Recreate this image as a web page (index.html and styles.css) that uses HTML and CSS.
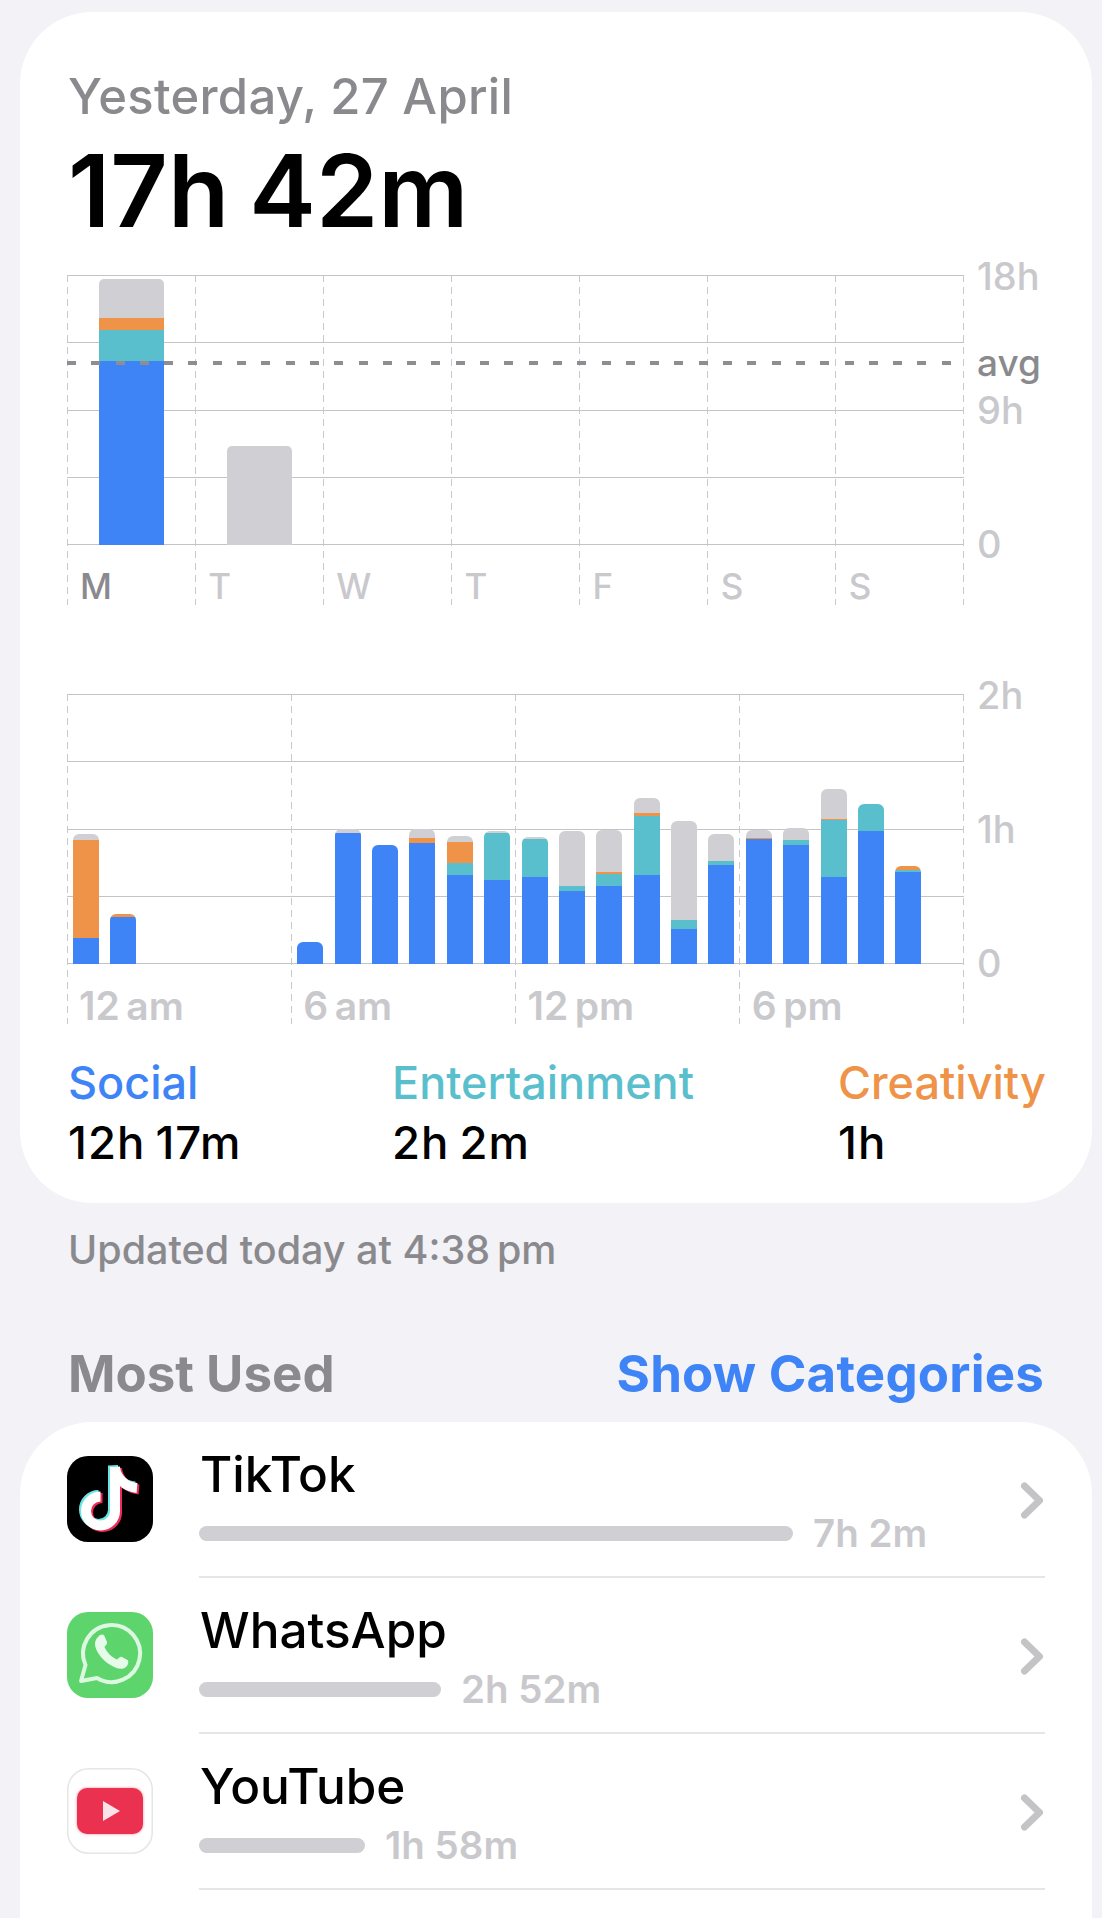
FILE: index.html

```html
<!DOCTYPE html>
<html lang="en">
<head>
    <meta charset="UTF-8">
    <meta name="viewport" content="width=device-width, initial-scale=1.0">
    <title>Screen Time</title>
    <link rel="stylesheet" href="styles.css">
</head>
<body>
    <section class="card summary">
        <div class="day">Yesterday, 27 April</div>
        <div class="total">17h 42m</div>

        <div class="chart week-chart">
            <div class="plot">
                <div class="hlines"><i></i><i></i><i></i><i></i><i></i></div>
                <div class="vlines"><i></i><i></i><i></i><i></i><i></i><i></i><i></i><i></i></div>
                <div class="bars week">
                    <div class="bar">
                        <span class="other" style="height:39px"></span>
                        <span class="creativity" style="height:12px"></span>
                        <span class="entertainment" style="height:31px"></span>
                        <span class="social" style="height:184px"></span>
                    </div>
                    <div class="bar">
                        <span class="other" style="height:99px"></span>
                    </div>
                </div>
                <div class="avg-line"></div>
                <div class="xlabels week">
                    <span class="current">M</span><span>T</span><span>W</span><span>T</span><span>F</span><span>S</span><span>S</span>
                </div>
            </div>
            <div class="axis">
                <span>18h</span><span>9h</span><span>0</span>
                <b class="avg">avg</b>
            </div>
        </div>

        <div class="chart hour-chart">
            <div class="plot">
                <div class="hlines"><i></i><i></i><i></i><i></i><i></i></div>
                <div class="vlines"><i></i><i></i><i></i><i></i><i></i></div>
                <div class="bars hours">
                    <div class="bar"><span class="other" style="height:6px"></span><span class="creativity" style="height:98px"></span><span class="social" style="height:26px"></span></div>
                    <div class="bar"><span class="creativity" style="height:3px"></span><span class="social" style="height:47px"></span></div>
                    <div class="bar empty"></div>
                    <div class="bar empty"></div>
                    <div class="bar empty"></div>
                    <div class="bar empty"></div>
                    <div class="bar"><span class="social" style="height:22px"></span></div>
                    <div class="bar"><span class="other" style="height:4px"></span><span class="social" style="height:131px"></span></div>
                    <div class="bar"><span class="social" style="height:119px"></span></div>
                    <div class="bar"><span class="other" style="height:9px"></span><span class="creativity" style="height:5px"></span><span class="social" style="height:121px"></span></div>
                    <div class="bar"><span class="other" style="height:6px"></span><span class="creativity" style="height:21px"></span><span class="entertainment" style="height:12px"></span><span class="social" style="height:89px"></span></div>
                    <div class="bar"><span class="other" style="height:2px"></span><span class="entertainment" style="height:47px"></span><span class="social" style="height:84px"></span></div>
                    <div class="bar"><span class="other" style="height:2px"></span><span class="entertainment" style="height:38px"></span><span class="social" style="height:87px"></span></div>
                    <div class="bar"><span class="other" style="height:55px"></span><span class="entertainment" style="height:5px"></span><span class="social" style="height:73px"></span></div>
                    <div class="bar"><span class="other" style="height:42px"></span><span class="creativity" style="height:2px"></span><span class="entertainment" style="height:12px"></span><span class="social" style="height:78px"></span></div>
                    <div class="bar"><span class="other" style="height:15px"></span><span class="creativity" style="height:3px"></span><span class="entertainment" style="height:59px"></span><span class="social" style="height:89px"></span></div>
                    <div class="bar"><span class="other" style="height:99px"></span><span class="entertainment" style="height:9px"></span><span class="social" style="height:35px"></span></div>
                    <div class="bar"><span class="other" style="height:27px"></span><span class="entertainment" style="height:4px"></span><span class="social" style="height:99px"></span></div>
                    <div class="bar"><span class="other" style="height:8px"></span><span class="creativity" style="height:1px"></span><span class="social" style="height:125px"></span></div>
                    <div class="bar"><span class="other" style="height:12px"></span><span class="entertainment" style="height:5px"></span><span class="social" style="height:119px"></span></div>
                    <div class="bar"><span class="other" style="height:30px"></span><span class="creativity" style="height:1px"></span><span class="entertainment" style="height:57px"></span><span class="social" style="height:87px"></span></div>
                    <div class="bar"><span class="entertainment" style="height:27px"></span><span class="social" style="height:133px"></span></div>
                    <div class="bar"><span class="creativity" style="height:4px"></span><span class="entertainment" style="height:2px"></span><span class="social" style="height:92px"></span></div>
                </div>
                <div class="xlabels hours">
                    <span>12&#8201;am</span><span>6&#8201;am</span><span>12&#8201;pm</span><span>6&#8201;pm</span>
                </div>
            </div>
            <div class="axis">
                <span>2h</span><span>1h</span><span>0</span>
            </div>
        </div>

        <div class="legend">
            <div class="legend-item">
                <div class="legend-name text-social">Social</div>
                <div class="legend-time">12h 17m</div>
            </div>
            <div class="legend-item">
                <div class="legend-name text-entertainment">Entertainment</div>
                <div class="legend-time">2h 2m</div>
            </div>
            <div class="legend-item">
                <div class="legend-name text-creativity">Creativity</div>
                <div class="legend-time">1h</div>
            </div>
        </div>
    </section>

    <p class="updated">Updated today at 4:38&#8201;pm</p>

    <div class="section-head">
        <span class="section-title">Most Used</span>
        <span class="section-link">Show Categories</span>
    </div>

    <section class="card apps">
        <div class="app-row">
            <svg class="app-icon" viewBox="0 0 86 86">
                <defs>
                    <g id="note" fill="none" stroke-width="10">
                        <path d="M48 11V55A14.5 14.5 0 1 1 33.500 40.500"/>
                        <path d="M48 11C49 22 58 31 70 32"/>
                    </g>
                </defs>
                <rect width="86" height="86" rx="21" fill="#000"/>
                <use href="#note" x="-2" y="-1.500" stroke="#69e6e4"/>
                <use href="#note" x="2" y="1.500" stroke="#ee2c5a"/>
                <use href="#note" stroke="#fff"/>
            </svg>
            <div class="app-info">
                <div class="app-name">TikTok</div>
                <div class="usage">
                    <div class="usage-bar" style="width:594px"></div>
                    <span class="usage-time">7h 2m</span>
                </div>
            </div>
            <svg class="chevron" viewBox="0 0 24 38"><path d="M4.500 4L19.500 18.500L4.500 33"/></svg>
        </div>
        <div class="app-row">
            <svg class="app-icon" viewBox="0 0 86 86">
                <rect width="86" height="86" rx="21" fill="#5dd46c"/>
                <path d="M14 69L18.500 53A28.500 28.500 0 1 1 30 66Z" fill="none" stroke="#dcf8e0" stroke-width="4" stroke-linejoin="round"/>
                <path d="M31 25C34 22 36 22 37.500 24L40 30C40.500 32 38.500 33.500 37.500 35C40 40.500 44.500 45 50 47.500C52 46 53 44 55 45L60.500 48C62 49 61.500 53 58.500 55.500C55 58 49 57 41 51.500C33 45.500 28 37.500 28 32C28 29 29 27 31 25Z" fill="#e6fbe9"/>
            </svg>
            <div class="app-info">
                <div class="app-name">WhatsApp</div>
                <div class="usage">
                    <div class="usage-bar" style="width:242px"></div>
                    <span class="usage-time">2h 52m</span>
                </div>
            </div>
            <svg class="chevron" viewBox="0 0 24 38"><path d="M4.500 4L19.500 18.500L4.500 33"/></svg>
        </div>
        <div class="app-row">
            <svg class="app-icon" viewBox="0 0 86 86">
                <rect x="0.750" y="0.750" width="84.500" height="84.500" rx="21" fill="#fff" stroke="#e6e6e8" stroke-width="1.500"/>
                <rect class="yt-logo" x="10" y="20" width="66" height="46" rx="10"/>
                <path d="M36 33L53 43L36 53Z" fill="#fbe4e8"/>
            </svg>
            <div class="app-info">
                <div class="app-name">YouTube</div>
                <div class="usage">
                    <div class="usage-bar" style="width:166px"></div>
                    <span class="usage-time">1h 58m</span>
                </div>
            </div>
            <svg class="chevron" viewBox="0 0 24 38"><path d="M4.500 4L19.500 18.500L4.500 33"/></svg>
        </div>
    </section>
</body>
</html>
```

FILE: styles.css

```css
body {
    margin: 0;
    width: 1102px;
    height: 1918px;
    overflow: hidden;
    background-color: #f2f2f7;
    font-family: Inter, "Liberation Sans", sans-serif;
    color: #000;
}
.card {
    margin: 0 10px 0 20px;
    background-color: #fff;
    border-radius: 72px;
}
.summary {
    margin-top: 12px;
    height: 1191px;
    padding: 56px 48px 0;
    box-sizing: border-box;
}
.day {
    font-size: 49px;
    line-height: 58px;
    font-weight: 500;
    color: #8a8a8e;
    letter-spacing: 0.3px;
}
.total {
    margin-top: 7px;
    font-size: 100px;
    line-height: 116px;
    font-weight: 600;
    word-spacing: -5px;
}
.chart {
    display: flex;
    margin-left: -1px;
}
.week-chart {
    margin-top: 26px;
}
.hour-chart {
    margin-top: 89px;
}
.plot {
    position: relative;
    width: 897px;
    height: 330px;
    flex-shrink: 0;
}
.hlines {
    position: absolute;
    top: 0;
    left: 0;
    right: 0;
    height: 270px;
    display: flex;
    flex-direction: column;
    justify-content: space-between;
}
.hlines i {
    display: block;
    height: 1px;
    background-color: #c4c4c8;
}
.vlines {
    position: absolute;
    top: 0;
    left: 0;
    right: 0;
    height: 330px;
    display: flex;
    justify-content: space-between;
}
.vlines i {
    display: block;
    width: 1px;
    background: repeating-linear-gradient(#c9c9cd 0 7px, transparent 7px 12px);
}
.bars {
    position: absolute;
    top: 0;
    left: 0;
    right: 0;
    height: 270px;
    display: grid;
    align-items: end;
}
.bars.week {
    grid-template-columns: repeat(7, 1fr);
}
.bars.hours {
    grid-template-columns: repeat(24, 1fr);
}
.bar {
    display: flex;
    flex-direction: column;
    overflow: hidden;
}
.week .bar {
    width: 65px;
    margin-left: 32px;
    border-radius: 5px 5px 0 0;
}
.hours .bar {
    width: 26px;
    margin-left: 6px;
    border-radius: 6px 6px 0 0;
}
.social { background-color: #3e84f6; }
.entertainment { background-color: #5abfcd; }
.creativity { background-color: #ee9347; }
.other { background-color: #d0d0d4; }
.avg-line {
    position: absolute;
    top: 86px;
    left: 0;
    right: 0;
    height: 4px;
    background: repeating-linear-gradient(90deg, #8e8e92 0 9px, transparent 9px 24.300px);
}
.xlabels {
    position: absolute;
    top: 281px;
    left: 0;
    right: 0;
    height: 60px;
    display: grid;
    align-items: center;
    color: #c9c9cd;
    font-weight: 500;
}
.xlabels.week {
    grid-template-columns: repeat(7, 1fr);
    font-size: 35px;
}
.xlabels.week span {
    padding-left: 13px;
}
.xlabels .current {
    color: #8a8a8e;
}
.xlabels.hours {
    grid-template-columns: repeat(4, 1fr);
    font-size: 39px;
    font-weight: 600;
}
.xlabels.hours span {
    padding-left: 12px;
}
.axis {
    position: relative;
    margin-left: 13px;
    height: 270px;
    display: flex;
    flex-direction: column;
    justify-content: space-between;
    font-size: 38px;
    font-weight: 500;
    color: #c9c9cd;
}
.axis span {
    display: block;
    height: 2px;
    line-height: 2px;
}
.avg {
    position: absolute;
    top: 88px;
    left: 0;
    line-height: 0;
    font-size: 37px;
    font-weight: 500;
    color: #8a8a8e;
}
.legend {
    margin-top: 32px;
    display: grid;
    grid-template-columns: 324px 446px auto;
}
.legend-name {
    font-size: 45px;
    line-height: 54px;
    font-weight: 500;
}
.legend-time {
    margin-top: 6px;
    font-size: 45.500px;
    line-height: 54px;
    font-weight: 500;
    letter-spacing: 1px;
    word-spacing: -3px;
}
.text-social { color: #3e84f6; }
.text-entertainment { color: #5abfcd; }
.text-creativity { color: #ee9347; }
.updated {
    margin: 20px 0 0 68px;
    font-size: 39.500px;
    line-height: 54px;
    font-weight: 500;
    color: #8a8a8e;
}
.section-head {
    margin: 67px 58px 0 68px;
    display: flex;
    justify-content: space-between;
    font-size: 51px;
    line-height: 60px;
    font-weight: 700;
}
.section-title { color: #8a8a8e; }
.section-link {
    color: #3e84f6;
    letter-spacing: 0.2px;
}
.apps {
    margin-top: 18px;
    padding: 0 47px;
    height: 496px;
    box-sizing: border-box;
    border-radius: 72px 72px 0 0;
}
.app-row {
    height: 156px;
    box-sizing: border-box;
    display: flex;
    align-items: flex-start;
    position: relative;
}
.app-icon {
    width: 86px;
    height: 86px;
    margin-top: 34px;
    flex-shrink: 0;
}
.yt-logo {
    fill: #ea3250;
    filter: drop-shadow(0 0 1.500px #f58ea0);
}
.app-info {
    flex-grow: 1;
    height: 156px;
    box-sizing: border-box;
    margin-left: 46px;
    padding-top: 23px;
    border-bottom: 2px solid #e5e5ea;
}
.app-name {
    margin-left: 1px;
    font-size: 49.500px;
    line-height: 58px;
    font-weight: 500;
}
.usage {
    margin-top: 8px;
    display: flex;
    align-items: center;
    gap: 20px;
}
.usage-bar {
    height: 15px;
    border-radius: 8px;
    background-color: #d0d0d4;
}
.usage-time {
    font-size: 38.500px;
    line-height: 44px;
    font-weight: 600;
    color: #c9c9cd;
}
.chevron {
    position: absolute;
    right: 1px;
    top: 60px;
    width: 24px;
    height: 38px;
    fill: none;
    stroke: #c4c4c6;
    stroke-width: 7;
    stroke-linecap: round;
    stroke-linejoin: round;
}
```
